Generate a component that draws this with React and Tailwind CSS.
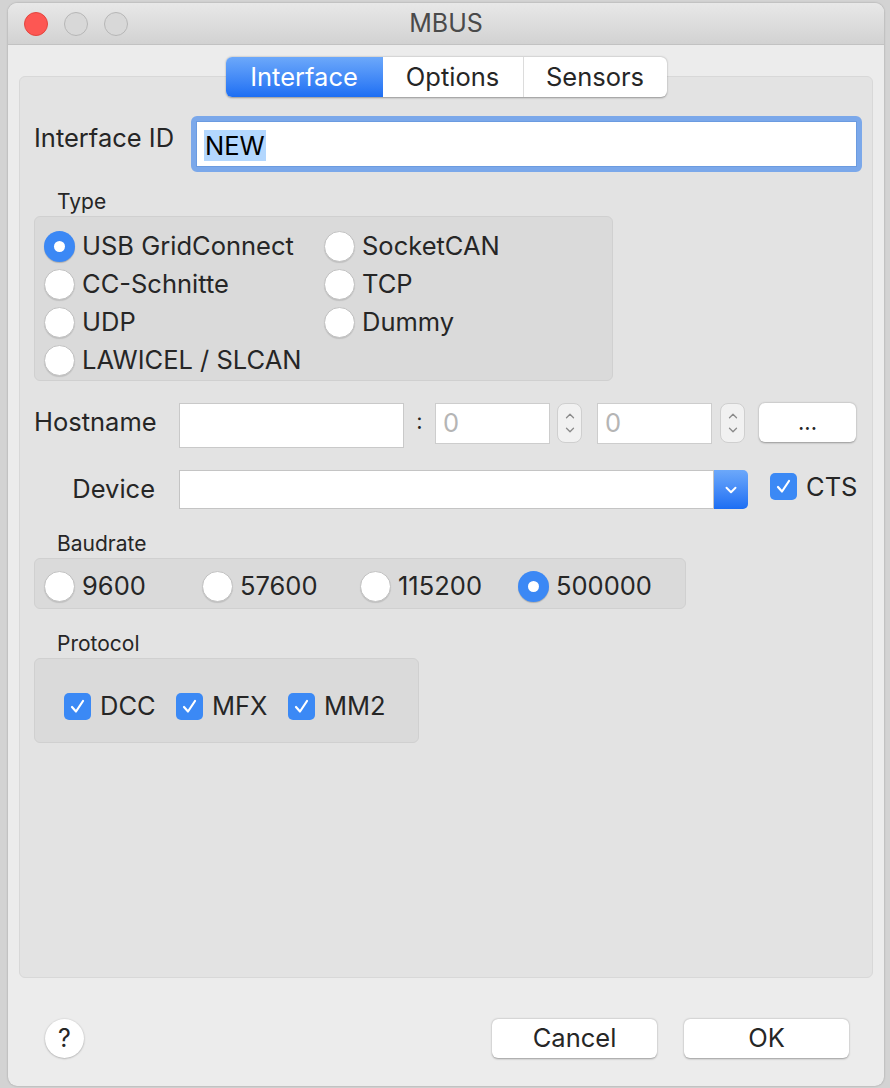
import { ChevronUp, ChevronDown } from "lucide-react";

const font = { fontFamily: "Inter, 'Liberation Sans', sans-serif" };

function Radio({ checked, label }) {
  return (
    <div className="flex items-center gap-[7px] h-[38px]">
      {checked ? (
        <div className="w-[31px] h-[31px] shrink-0 rounded-full bg-[#3b88f5] flex items-center justify-center shadow-[0_1px_1px_rgba(0,0,0,0.2)]">
          <div className="w-[11px] h-[11px] rounded-full bg-white" />
        </div>
      ) : (
        <div className="w-[31px] h-[31px] shrink-0 rounded-full bg-white border border-[#c2c2c2] shadow-[0_1px_1px_rgba(0,0,0,0.12)]" />
      )}
      <span className="text-[25.5px] text-[#262626] leading-none whitespace-nowrap">{label}</span>
    </div>
  );
}

function Check({ label }) {
  return (
    <div className="flex items-center gap-[9px]">
      <div className="w-[27px] h-[27px] rounded-[5px] bg-[#3b89f5] flex items-center justify-center">
        <svg width="17" height="17" viewBox="0 0 17 17">
          <path d="M3 9 L7 13.5 L14 3" fill="none" stroke="white" strokeWidth="2.2" strokeLinecap="round" strokeLinejoin="round" />
        </svg>
      </div>
      <span className="text-[25.5px] text-[#262626] leading-none">{label}</span>
    </div>
  );
}

function Stepper() {
  return (
    <div className="w-[25px] h-[40px] rounded-[8px] bg-[#f1f1f1] border border-[#cfcfcf] flex flex-col items-center justify-center text-[#8a8a8a]">
      <ChevronUp size={14} strokeWidth={2.2} />
      <ChevronDown size={14} strokeWidth={2.2} />
    </div>
  );
}

export default function App() {
  return (
    <div className="w-[890px] h-[1088px] bg-[#d3d3d3] overflow-hidden pl-[8px] pt-[3px]" style={font}>
      <div className="w-[876px] h-[1083px] rounded-[9px] bg-[#ececec] overflow-hidden flex flex-col shadow-[0_0_2px_rgba(0,0,0,0.3)]">
        {/* Title bar */}
        <div className="h-[42px] shrink-0 bg-gradient-to-b from-[#e8e8e8] to-[#d2d2d2] border-b border-[#c2c2c2] flex items-center relative">
          <div className="flex items-center gap-[16px] pl-[16px]">
            <div className="w-[24px] h-[24px] rounded-full bg-[#fd5753] border border-[#e2463f]" />
            <div className="w-[24px] h-[24px] rounded-full bg-[#d8d8d8] border border-[#b6b6b6]" />
            <div className="w-[24px] h-[24px] rounded-full bg-[#d8d8d8] border border-[#b6b6b6]" />
          </div>
          <div className="absolute inset-0 flex items-center justify-center text-[25px] text-[#4a4a4a]">MBUS</div>
        </div>

        {/* Body */}
        <div className="flex-1 flex flex-col px-[11px] pt-[12px]">
          {/* Tabs */}
          <div className="relative z-10 flex justify-center">
            <div className="flex h-[40px] rounded-[6px] overflow-hidden bg-white shadow-[0_0.5px_2px_rgba(0,0,0,0.35)] text-[25.5px]">
              <div className="w-[157px] flex items-center justify-center text-white bg-gradient-to-b from-[#6ca8fa] to-[#1c6ef3]">Interface</div>
              <div className="w-[141px] flex items-center justify-center text-[#262626] border-r border-[#dcdcdc]">Options</div>
              <div className="w-[143px] flex items-center justify-center text-[#262626]">Sensors</div>
            </div>
          </div>

          {/* Tab panel */}
          <div className="-mt-[21px] h-[902px] rounded-[6px] bg-[#e3e3e3] border border-[#d8d8d8] flex flex-col pl-[14px] text-[#262626]">
            {/* Interface ID */}
            <div className="mt-[39px] flex items-start pr-[10px]">
              <span className="w-[157px] text-[25.5px] mt-[7px] leading-[30px]">Interface ID</span>
              <div className="flex-1 h-[56px] rounded-[6px] border-[5px] border-[#7ba8ea] bg-white">
                <div className="h-full border border-[#6b9be0] flex items-center pl-[7px] pt-[2px]">
                  <span className="bg-[#b3d7fe] text-[25.5px] text-black leading-[31px] px-[1px]">NEW</span>
                </div>
              </div>
            </div>

            {/* Type */}
            <span className="mt-[18px] pl-[23px] text-[21px] leading-[24px]">Type</span>
            <div className="mt-[2px] w-[579px] h-[165px] rounded-[6px] bg-[#dadada] border border-[#d0d0d0] pl-[9px] pt-[10px] grid grid-cols-[280px_1fr] content-start">
              <Radio checked label="USB GridConnect" />
              <Radio label="SocketCAN" />
              <Radio label="CC-Schnitte" />
              <Radio label="TCP" />
              <Radio label="UDP" />
              <Radio label="Dummy" />
              <Radio label="LAWICEL / SLCAN" />
            </div>

            {/* Hostname */}
            <div className="mt-[22px] flex items-start h-[45px]">
              <span className="w-[145px] text-[25.5px] leading-[37px]">Hostname</span>
              <div className="w-[225px] h-[45px] bg-white border border-[#c9c9c9]" />
              <span className="w-[31px] text-center text-[22px] leading-[36px]">:</span>
              <div className="w-[115px] h-[41px] bg-white border border-[#cdcdcd] flex items-center pl-[7px] text-[25.5px] text-[#b5b5b5]">0</div>
              <div className="ml-[7px]"><Stepper /></div>
              <div className="ml-[15px] w-[115px] h-[41px] bg-white border border-[#cdcdcd] flex items-center pl-[7px] text-[25.5px] text-[#b5b5b5]">0</div>
              <div className="ml-[8px]"><Stepper /></div>
              <div className="ml-[14px] w-[97px] h-[39px] rounded-[6px] bg-white shadow-[0_0.5px_2px_rgba(0,0,0,0.35)] flex items-center justify-center text-[22px] pb-[1px]">...</div>
            </div>

            {/* Device */}
            <div className="mt-[22px] flex items-center h-[39px]">
              <span className="w-[145px] pr-[24px] text-right text-[25.5px]">Device</span>
              <div className="w-[569px] h-[39px] flex rounded-r-[5px] overflow-hidden">
                <div className="flex-1 bg-white border border-[#c4c4c4]" />
                <div className="w-[34px] bg-gradient-to-b from-[#6ca8fa] to-[#1c6ef3] flex items-center justify-center text-white">
                  <ChevronDown size={18} strokeWidth={2.6} />
                </div>
              </div>
              <div className="ml-[22px] -mt-[6px]"><Check label="CTS" /></div>
            </div>

            {/* Baudrate */}
            <span className="mt-[23px] pl-[23px] text-[21px] leading-[24px]">Baudrate</span>
            <div className="mt-[2px] w-[652px] h-[51px] rounded-[6px] bg-[#dadada] border border-[#d0d0d0] pl-[9px] pt-[5px] flex items-center">
              <div className="w-[158px]"><Radio label="9600" /></div>
              <div className="w-[158px]"><Radio label="57600" /></div>
              <div className="w-[158px]"><Radio label="115200" /></div>
              <div className="w-[158px]"><Radio checked label="500000" /></div>
            </div>

            {/* Protocol */}
            <span className="mt-[23px] pl-[23px] text-[21px] leading-[24px]">Protocol</span>
            <div className="mt-[2px] w-[385px] h-[85px] rounded-[6px] bg-[#dadada] border border-[#d0d0d0] pl-[29px] pt-[11px] flex items-center">
              <div className="w-[112px]"><Check label="DCC" /></div>
              <div className="w-[112px]"><Check label="MFX" /></div>
              <div className="w-[112px]"><Check label="MM2" /></div>
            </div>
          </div>

          {/* Footer */}
          <div className="mt-[41px] flex items-center h-[39px] pl-[26px] pr-[24px]">
            <div className="w-[39px] h-[39px] rounded-full bg-white shadow-[0_0.5px_2px_rgba(0,0,0,0.35)] flex items-center justify-center text-[25px] text-[#262626]">?</div>
            <div className="flex-1" />
            <div className="w-[165px] h-[39px] rounded-[6px] bg-white shadow-[0_0.5px_2px_rgba(0,0,0,0.35)] flex items-center justify-center text-[25.5px] text-[#262626]">Cancel</div>
            <div className="ml-[27px] w-[165px] h-[39px] rounded-[6px] bg-white shadow-[0_0.5px_2px_rgba(0,0,0,0.35)] flex items-center justify-center text-[25.5px] text-[#262626]">OK</div>
          </div>
        </div>
      </div>
    </div>
  );
}
